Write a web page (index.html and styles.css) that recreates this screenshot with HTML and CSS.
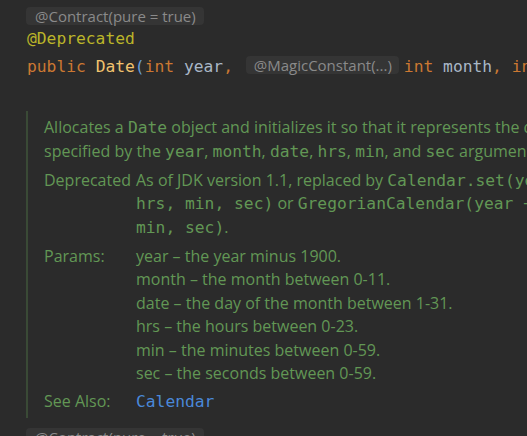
FILE: index.html
```html
<!DOCTYPE html>
<html>
<head>
<meta charset="utf-8">
<link rel="stylesheet" href="styles.css">
</head>
<body>
<div class="editor">
  <div class="row-top"><span class="inlay">@Contract(pure = true)</span></div>
  <div class="code ann-line"><span class="ann">@Deprecated</span></div>
  <div class="code sig-line"><span class="kw">public</span> <span class="fn">Date</span><span class="paren">(</span><span class="kw">int</span> <span class="param">year</span><span class="kw">,</span> <span class="inlay inlay-mid">@MagicConstant(...)</span><span class="kw">int</span> <span class="param">month</span><span class="kw">,</span> <span class="kw">int</span> <span class="param">date</span><span class="kw">,</span> <span class="kw">int</span> <span class="param">hrs</span></div>

  <div class="doc">
    <div class="desc">
      <div class="line">Allocates a <code>Date</code> object and initializes it so that it represents the date and time</div>
      <div class="line">specified by the <code>year</code>, <code>month</code>, <code>date</code>, <code>hrs</code>, <code>min</code>, and <code>sec</code> arguments, in the local time zone.</div>
    </div>
    <div class="section">
      <div class="label">Deprecated</div>
      <div class="value">
        <div class="line">As of JDK version 1.1, replaced by <code>Calendar.set(year + 1900, month, date,</code></div>
        <div class="line"><code>hrs, min, sec)</code> or <code>GregorianCalendar(year + 1900, month, date, hrs,</code></div>
        <div class="line"><code>min, sec)</code>.</div>
      </div>
    </div>
    <div class="section">
      <div class="label">Params:</div>
      <div class="value">
        <div class="line">year – the year minus 1900.</div>
        <div class="line">month – the month between 0-11.</div>
        <div class="line">date – the day of the month between 1-31.</div>
        <div class="line">hrs – the hours between 0-23.</div>
        <div class="line">min – the minutes between 0-59.</div>
        <div class="line">sec – the seconds between 0-59.</div>
      </div>
    </div>
    <div class="section see">
      <div class="label">See Also:</div>
      <div class="value">
        <div class="line"><code class="link">Calendar</code></div>
      </div>
    </div>
  </div>
  <div class="row-bottom"><span class="inlay">@Contract(pure = true)</span></div>
</div>
</body>
</html>
```
FILE: styles.css
```css
html, body {
  margin: 0;
  padding: 0;
  background: #2b2b2b;
  overflow: hidden;
  width: 527px;
  height: 436px;
}

.editor {
  padding-top: 7px;
}

.inlay {
  display: inline-block;
  background: #353535;
  color: #8a8a8a;
  font-family: "Open Sans", sans-serif;
  font-size: 15px;
  height: 18px;
  line-height: 18px;
  padding: 0 8px 0 9px;
  border-radius: 4px;
  white-space: nowrap;
}

.row-top {
  padding-left: 26px;
  height: 18px;
}

.code {
  font-family: "DejaVu Sans Mono", monospace;
  font-size: 16.3px;
  line-height: 24px;
  padding-left: 27px;
  white-space: pre;
  color: #a9b7c6;
}

.ann-line {
  margin-top: 2px;
}

.sig-line {
  margin-top: 4px;
}

.inlay-mid {
  vertical-align: 1px;
  margin-left: 3px;
  margin-right: 5px;
  padding: 0 7px 0 8px;
}

.ann { color: #bbb529; }
.kw { color: #cc7832; }
.fn { color: #f2c36e; }
.paren { color: #6a9ed6; }
.param { color: #a9b7c6; }

.doc {
  margin: 32px 0 0 26px;
  border-left: 2px solid #3a4a36;
  padding: 5px 0 4px 16px;
  color: #629755;
  font-family: "Open Sans", sans-serif;
  font-size: 16px;
  white-space: nowrap;
}

.line {
  line-height: 23.5px;
  height: 23.5px;
}

.doc code {
  font-family: "DejaVu Sans Mono", monospace;
  font-size: 16.3px;
}

.section {
  display: grid;
  grid-template-columns: 92px 1fr;
  margin-top: 5.5px;
}

.see {
  margin-top: 4.5px;
}

.link {
  color: #4a88d8;
}

.row-bottom {
  padding-left: 26px;
  margin-top: 10px;
}
```
